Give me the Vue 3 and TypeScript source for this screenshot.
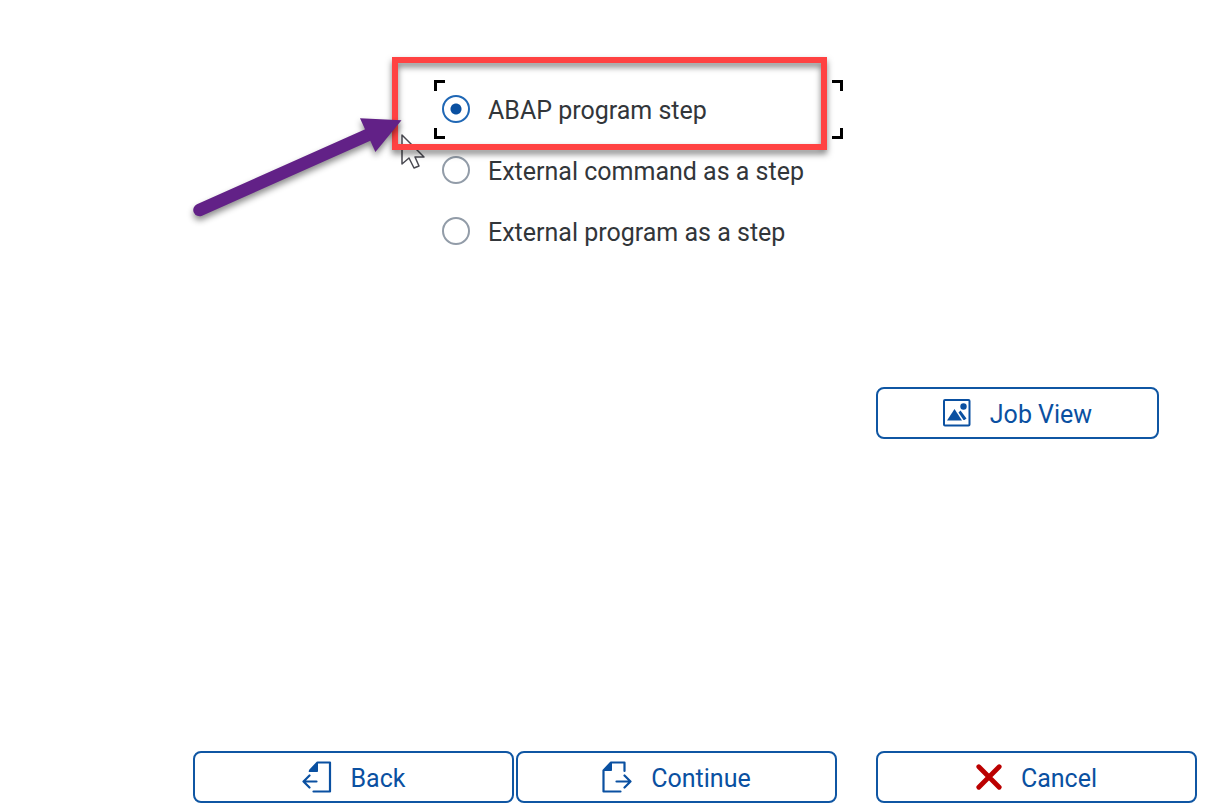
<script setup lang="ts">
import { ref } from 'vue'

interface StepOption {
  value: string
  label: string
}

const options: StepOption[] = [
  { value: 'abap', label: 'ABAP program step' },
  { value: 'command', label: 'External command as a step' },
  { value: 'program', label: 'External program as a step' },
]

const selected = ref<string>('abap')
</script>

<template>
  <main class="page">
    <div class="options" role="radiogroup" aria-label="Step type">
      <label
        v-for="option in options"
        :key="option.value"
        class="option"
        :class="{ focused: option.value === 'abap' }"
      >
        <input v-model="selected" class="radio" type="radio" name="step" :value="option.value" />
        <span class="text">{{ option.label }}</span>
      </label>

      <svg class="pointer" viewBox="0 0 26 38" aria-hidden="true">
        <path
          d="M2 2V31L9 25L14 35L19 33L15 24H24Z"
          fill="#fff"
          stroke="#4a4a52"
          stroke-width="1.5"
          stroke-linejoin="round"
        />
      </svg>
      <div class="highlight"></div>
      <svg class="arrow" viewBox="0 0 220 120" aria-hidden="true">
        <path d="M9.5 100L180 24" stroke="#622187" stroke-width="12.5" stroke-linecap="round" />
        <path d="M170 8.2L211.5 10.3L185.4 42Z" fill="#622187" />
      </svg>
    </div>

    <div class="grid view-row">
      <button class="button job-view" type="button">
        <svg class="icon" width="28" height="28" viewBox="0 0 28 28" aria-hidden="true">
          <rect x="1" y="1" width="25.5" height="25.5" rx="1" fill="none" stroke="currentColor" stroke-width="2" />
          <path d="M4 21.5L11.5 10L19 21.5Z" fill="currentColor" />
          <path d="M15.5 13.5L17.5 11.5L23.5 19.5L21.5 21H20.5Z" fill="currentColor" />
          <circle cx="20.5" cy="7.5" r="3.2" fill="currentColor" />
        </svg>
        <span class="text">Job View</span>
      </button>
    </div>

    <footer class="grid footer">
      <button class="button back" type="button">
        <svg class="icon" width="30" height="32" viewBox="0 0 30 32" aria-hidden="true">
          <g fill="none" stroke="currentColor" stroke-width="2.2" stroke-linecap="round" stroke-linejoin="round">
            <path d="M8 9.5L15.5 1.5H28V30.5H11.5" />
            <path d="M14.5 20.5H1.5M7.5 14.5L1.5 20.5L7.5 26.5" />
          </g>
          <path d="M7 10.5L15.5 1.5V10.5Z" fill="currentColor" stroke="currentColor" />
        </svg>
        <span class="text">Back</span>
      </button>
      <button class="button continue" type="button">
        <svg class="icon" width="30" height="32" viewBox="0 0 30 32" aria-hidden="true">
          <g fill="none" stroke="currentColor" stroke-width="2.2" stroke-linecap="round" stroke-linejoin="round">
            <path d="M18.5 30.5H1.5V9.5L9 1.5H22.5V10" />
            <path d="M14.5 20.5H28.5M22.5 14.5L28.5 20.5L22.5 26.5" />
          </g>
          <path d="M1.5 9.5L9.5 1.5V9.5Z" fill="currentColor" stroke="currentColor" />
        </svg>
        <span class="text">Continue</span>
      </button>
      <button class="button cancel" type="button">
        <svg class="icon" width="26" height="26" viewBox="0 0 26 26" aria-hidden="true">
          <path d="M2.8 2.8L23.2 23.2M23.2 2.8L2.8 23.2" stroke="#bb0000" stroke-width="4.8" stroke-linecap="round" />
        </svg>
        <span class="text">Cancel</span>
      </button>
    </footer>
  </main>
</template>

<style>
body {
  margin: 0;
  background: #fff;
}
</style>

<style scoped>
.page {
  box-sizing: border-box;
  min-height: 100vh;
  padding: 80px 20px 9px 193px;
  display: flex;
  flex-direction: column;
  font-family: Roboto, "Liberation Sans", sans-serif;
  font-size: 25px;
  line-height: 32px;
  color: #32363a;
}

.options {
  position: relative;
  display: flex;
  flex-direction: column;
  gap: 2px;
  width: 409px;
  margin-left: 241px;
}

.option {
  box-sizing: border-box;
  display: flex;
  align-items: center;
  gap: 18px;
  height: 59px;
  padding: 0 0 1px 8px;
  white-space: nowrap;
}

.text {
  padding-top: 3px;
}

.focused {
  background:
    linear-gradient(#000, #000) left top / 11px 3px,
    linear-gradient(#000, #000) left top / 3px 11px,
    linear-gradient(#000, #000) right top / 11px 3px,
    linear-gradient(#000, #000) right top / 3px 11px,
    linear-gradient(#000, #000) left bottom / 11px 3px,
    linear-gradient(#000, #000) left bottom / 3px 11px,
    linear-gradient(#000, #000) right bottom / 11px 3px,
    linear-gradient(#000, #000) right bottom / 3px 11px;
  background-repeat: no-repeat;
}

.radio {
  appearance: none;
  box-sizing: border-box;
  flex: none;
  width: 28px;
  height: 28px;
  margin: 0;
  border: 2px solid #929ca8;
  border-radius: 50%;
  background: #fff;
}

.radio:checked {
  border-color: #1f67b5;
  background: radial-gradient(circle, #0a50a1 5px, #fff 6px);
}

.highlight {
  position: absolute;
  top: -23px;
  left: -42px;
  box-sizing: border-box;
  width: 435px;
  height: 93px;
  border: 6px solid #ff4242;
  filter: drop-shadow(0 4px 3px rgba(0, 0, 0, 0.5));
  pointer-events: none;
}

.pointer {
  position: absolute;
  top: 53px;
  left: -34px;
  width: 26px;
  height: 38px;
  pointer-events: none;
}

.arrow {
  position: absolute;
  top: 30px;
  left: -244px;
  width: 220px;
  height: 120px;
  overflow: visible;
  filter: drop-shadow(0 4px 3px rgba(0, 0, 0, 0.45));
  pointer-events: none;
}

.grid {
  display: grid;
  grid-template-columns: 1fr 2px 1fr 39px 1fr;
}

.view-row {
  margin-top: 126px;
}

.footer {
  margin-top: auto;
}

.button {
  box-sizing: border-box;
  display: flex;
  align-items: center;
  justify-content: center;
  gap: 19px;
  height: 52px;
  padding: 0;
  border: 2px solid #0f56a3;
  border-radius: 8px;
  background: #fff;
  color: #0a50a1;
  font: inherit;
}

.icon {
  flex: none;
}

.job-view {
  grid-column: 5;
  margin-right: 38px;
}

.back {
  grid-column: 1;
}

.continue {
  grid-column: 3;
}

.cancel {
  grid-column: 5;
}
</style>
